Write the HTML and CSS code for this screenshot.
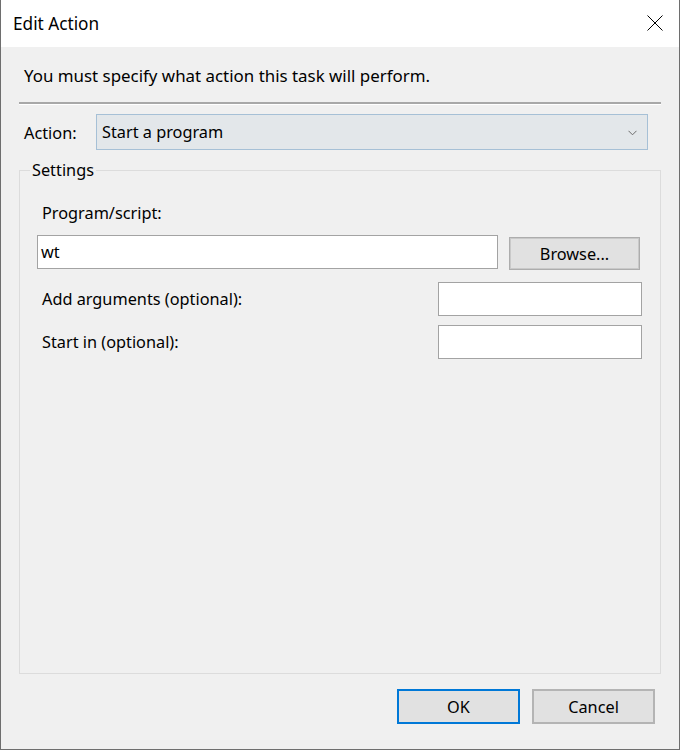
FILE: index.html
```html
<!DOCTYPE html>
<html>
<head>
<meta charset="utf-8">
<link rel="stylesheet" href="styles.css">
</head>
<body>
<div class="window">
  <div class="titlebar">
    <span class="title">Edit Action</span>
    <svg class="close" width="16" height="16" viewBox="0 0 16 16"><path d="M0.5 0.5 L15.5 15.5 M15.5 0.5 L0.5 15.5" stroke="#000" stroke-width="1" fill="none"/></svg>
  </div>
  <div class="content">
    <div class="msg">You must specify what action this task will perform.</div>
    <div class="sep"></div>
    <div class="action-row">
      <span class="action-label">Action:</span>
      <div class="select">
        <span>Start a program</span>
        <svg class="chev" width="9" height="6" viewBox="0 0 9 6"><path d="M0.5 0.8 L4.5 4.8 L8.5 0.8" stroke="#6b6b6b" stroke-width="1" fill="none"/></svg>
      </div>
    </div>
    <fieldset class="group">
      <legend>Settings</legend>
      <div class="lbl prog-lbl">Program/script:</div>
      <div class="prog-row">
        <div class="input prog-input">wt</div>
        <div class="btn browse">Browse...</div>
      </div>
      <div class="opt-row first">
        <span class="lbl">Add arguments (optional):</span>
        <div class="input opt-input"></div>
      </div>
      <div class="opt-row second">
        <span class="lbl">Start in (optional):</span>
        <div class="input opt-input"></div>
      </div>
    </fieldset>
    <div class="buttons">
      <div class="btn ok">OK</div>
      <div class="btn cancel">Cancel</div>
    </div>
  </div>
</div>
</body>
</html>
```

FILE: styles.css
```css
html, body {
  margin: 0;
  padding: 0;
}
body {
  font-family: "Noto Sans", "Open Sans", sans-serif;
  font-size: 16.3px;
  color: #000;
}
.window {
  width: 680px;
  height: 750px;
  box-sizing: border-box;
  border: 1px solid #6e6e6e;
  border-top: none;
  display: flex;
  flex-direction: column;
  background: #f0f0f0;
}
.titlebar {
  height: 47px;
  background: #fff;
  display: flex;
  align-items: center;
  padding-left: 12px;
  padding-right: 16px;
  flex-shrink: 0;
}
.title {
  font-size: 17.2px;
  flex: 1;
  line-height: 20px;
  margin-top: 0;
}
.close {
  margin-top: -1px;
}
.content {
  flex: 1;
  display: flex;
  flex-direction: column;
  padding: 0 18px;
}
.msg {
  margin-top: 18px;
  line-height: 21px;
  padding-left: 5px;
  font-size: 16.9px;
}
.sep {
  margin-top: 16px;
  height: 0;
  border-top: 2px solid #a8a8a8;
  border-bottom: 1px solid #fff;
}
.action-row {
  margin-top: 9px;
  display: flex;
  align-items: center;
  padding-left: 5px;
  padding-right: 13px;
}
.action-label {
  width: 72px;
  line-height: 20px;
  margin-top: 2px;
}
.select {
  width: 552px;
  height: 36px;
  box-sizing: border-box;
  border: 1px solid #a6c0d6;
  background: #e3e7ea;
  display: flex;
  align-items: center;
  justify-content: space-between;
  padding: 0 10px 0 5px;
}
.chev {
  margin-top: 1px;
}
.group {
  margin: 10px 0 0 0;
  padding: 0 18px 0 17px;
  border: 1px solid #dcdcdc;
  flex: 1;
  min-width: 0;
  display: flex;
  flex-direction: column;
}
.group legend {
  margin-left: -7px;
  padding: 0 2px;
  line-height: 20px;
}
.lbl {
  line-height: 20px;
}
.prog-lbl {
  margin-top: 23px;
  padding-left: 5px;
}
.prog-row {
  margin-top: 12px;
  display: flex;
  align-items: flex-start;
}
.input {
  box-sizing: border-box;
  height: 34px;
  background: #fff;
  border: 1px solid #a3a3a3;
  line-height: 32px;
  padding-left: 3px;
}
.prog-input {
  width: 461px;
}
.btn {
  box-sizing: border-box;
  background: #e1e1e1;
  border: 1px solid #adadad;
  box-shadow: inset 0 0 0 1px #c9c9c9;
  display: flex;
  align-items: center;
  justify-content: center;
}
.browse {
  width: 131px;
  height: 33px;
  margin-left: 11px;
  margin-top: 2px;
}
.opt-row {
  display: flex;
  align-items: center;
  justify-content: space-between;
  padding-left: 5px;
  padding-right: 0;
}
.opt-row.first {
  margin-top: 12px;
}
.opt-row.second {
  margin-top: 9px;
}
.opt-input {
  width: 204px;
}
.buttons {
  display: flex;
  justify-content: flex-end;
  gap: 12px;
  margin-top: 15px;
  margin-bottom: 25px;
  padding-right: 6px;
}
.buttons .btn {
  width: 123px;
  height: 35px;
}
.ok {
  border: 2px solid #0078d7 !important;
  box-shadow: none !important;
}
.cancel {
  border: 2px solid #b4b4b4 !important;
  box-shadow: none !important;
}
```
